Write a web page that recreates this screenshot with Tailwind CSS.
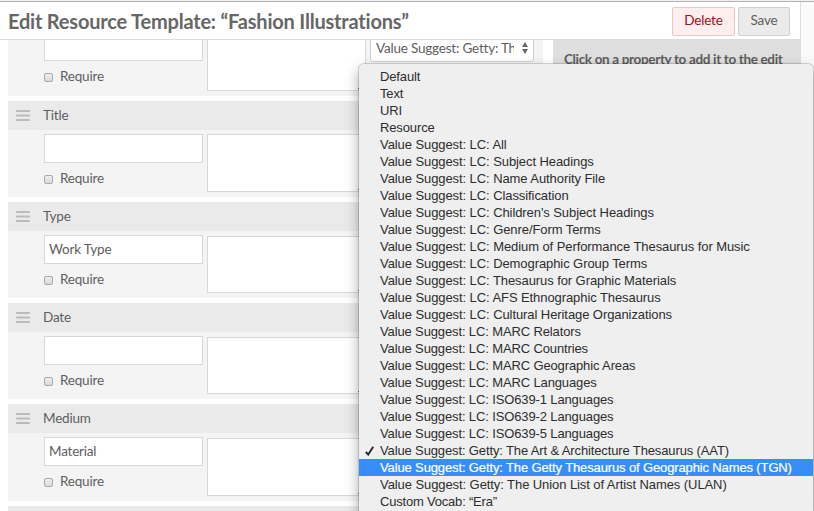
<!DOCTYPE html>
<html lang="en">
<head>
<meta charset="utf-8">
<title>Edit Resource Template</title>
<script src="https://cdn.jsdelivr.net/npm/@tailwindcss/browser@4"></script>
</head>
<body class="relative h-[511px] w-[814px] overflow-hidden bg-white font-[Lato,sans-serif] text-[13.5px] tracking-[-0.2px] text-[#5e5e5e]">
<div class="flex h-[511px] overflow-hidden">
  <div class="flex w-[800px] flex-col">
    <header class="relative z-10 flex h-10 shrink-0 items-center justify-between border-b border-[#dcdcdc] bg-white pt-[3px] pr-[10px] pl-2">
      <h1 class="text-[20px] leading-6 font-bold tracking-[-0.2px] whitespace-nowrap text-[#666]">Edit Resource Template: “Fashion Illustrations”</h1>
      <div class="flex gap-[3px]">
        <button class="h-[29px] w-[63px] rounded-[2px] border border-[#e6c8c8] bg-[#ffeeee] pb-px text-[#9c0f1c]">Delete</button>
        <button class="h-[29px] w-[52px] rounded-[2px] border border-[#cfcfcf] bg-[#ebebeb] pb-px">Save</button>
      </div>
    </header>
    <main class="-mt-10 flex h-[511px] gap-[10px] overflow-hidden pl-2">
      <ul id="rows" class="flex w-[535px] shrink-0 flex-col gap-[5px]"></ul>
      <aside class="h-[511px] w-[247px] bg-[#dfdfdf] pt-[49px] pl-[11px] text-[13.5px] leading-[21px] font-bold tracking-[-0.34px] whitespace-nowrap">Click on a property to add it to the edit</aside>
    </main>
  </div>
  <div class="w-[14px] border-l border-[#dedede] bg-[#fafafa]"></div>
</div>
<div class="absolute top-0 left-0 z-20 h-[2px] w-full border-b border-[#b2b2b2] bg-[#f1f1f1]"></div>

<template id="row">
  <li class="shrink-0 bg-[#f4f4f4]">
    <div class="flex h-[29px] items-center bg-[#eaeaea] pl-2">
      <svg class="mr-[13px] h-[13px] w-[14px]" viewBox="0 0 14 13"><path d="M1 2h12M1 6.5h12M1 11h12" stroke="#bbb" stroke-width="2.2" stroke-linecap="round"/></svg>
      <span class="label pb-px"></span>
    </div>
    <div class="fields flex gap-1 pl-9">
      <div class="w-[159px]">
        <div class="value flex h-[29px] items-center border border-[#d8d8d8] bg-white px-1"></div>
        <label class="mt-[5px] flex h-5 items-center"><span class="mt-[2px] mr-[7px] h-[9px] w-[9px] rounded-[2px] border border-[#a9a9a9] bg-linear-to-b from-[#efefef] to-[#d9d9d9]"></span><span>Require</span></label>
      </div>
      <div class="area"><svg class="absolute right-[1px] bottom-[1px] h-[6px] w-[6px]" viewBox="0 0 6 6"><path d="M0 6L6 0M3 6L6 3" stroke="#555" stroke-width=".9"/></svg></div>
    </div>
  </li>
</template>

<template id="select">
  <div class="flex h-[30px] w-[164px] items-center rounded-[3px] border border-[#cfcfcf] bg-white pt-[2px] pr-[5px] pl-[5px]">
    <span class="w-[138px] overflow-hidden whitespace-nowrap">Value Suggest: Getty: The Art</span>
    <svg class="ml-auto h-3 w-[6px]" viewBox="0 0 6 12"><path d="M0 5L3 0l3 5zM0 7h6L3 12z" fill="#666"/></svg>
  </div>
</template>

<div id="menu" class="absolute top-16 left-[359px] z-30 h-[447px] w-[454px] overflow-hidden rounded-t-[5px] bg-[#efefef] pt-1 font-['Liberation_Sans',sans-serif] text-[13px] leading-[17px] text-[#2d2d2d] shadow-[0_0_0_1px_rgba(0,0,0,0.14),0_6px_14px_rgba(0,0,0,0.35)]"></div>

<script>
const list = document.getElementById('rows');
const tpl = document.getElementById('row');
const rows = [
  { label: '', value: '', row: 'h-24', fields: 'pt-[3px]', area: 'h-[59px]', select: true },
  { label: 'Title', value: '', row: 'h-24', fields: 'pt-1', area: 'h-[58px]' },
  { label: 'Type', value: 'Work Type', row: 'h-24', fields: 'pt-1', area: 'mt-px h-[57px]' },
  { label: 'Date', value: '', row: 'h-24', fields: 'pt-1', area: 'mt-px h-[57px]' },
  { label: 'Medium', value: 'Material', row: 'h-[97px]', fields: 'pt-1', area: 'mt-px h-[58px]' }
];
rows.forEach(r => {
  const n = tpl.content.cloneNode(true);
  n.querySelector('li').className += ' ' + r.row;
  n.querySelector('.label').textContent = r.label;
  n.querySelector('.value').textContent = r.value;
  n.querySelector('.fields').className += ' ' + r.fields;
  n.querySelector('.area').className += ' relative w-[159px] border border-[#d8d8d8] bg-white ' + r.area;
  if (r.select) n.querySelector('.fields').append(document.getElementById('select').content.cloneNode(true));
  list.append(n);
});
const next = document.createElement('li');
next.className = 'h-[5px] shrink-0 bg-[#eaeaea]';
list.append(next);

const menu = document.getElementById('menu');
['Default','Text','URI','Resource',
 ...['All','Subject Headings','Name Authority File','Classification',"Children's Subject Headings",'Genre/Form Terms','Medium of Performance Thesaurus for Music','Demographic Group Terms','Thesaurus for Graphic Materials','AFS Ethnographic Thesaurus','Cultural Heritage Organizations','MARC Relators','MARC Countries','MARC Geographic Areas','MARC Languages','ISO639-1 Languages','ISO639-2 Languages','ISO639-5 Languages'].map(s => 'Value Suggest: LC: ' + s),
 'Value Suggest: Getty: The Art & Architecture Thesaurus (AAT)','Value Suggest: Getty: The Getty Thesaurus of Geographic Names (TGN)','Value Suggest: Getty: The Union List of Artist Names (ULAN)','Custom Vocab: “Era”'
].forEach((text, i) => {
  const d = document.createElement('div');
  d.className = i === 23 ? 'flex h-[17px] items-center bg-[#378efb] text-white [-webkit-text-stroke:0.2px_white]' : 'flex h-[17px] items-center';
  d.innerHTML = '<span class="flex w-[21px] shrink-0 justify-center">' + (i === 22 ? '<svg class="h-[10px] w-[9px]" viewBox="0 0 9 10"><path d="M.8 5.8L3.2 8.6L8.2 .8" fill="none" stroke="#222" stroke-width="1.8"/></svg>' : '') + '</span>';
  const s = document.createElement('span');
  if (i === 24 || (i > 3 && i < 15)) s.className = 'whitespace-nowrap tracking-[-0.08px]';
  else if (i === 25) s.className = 'whitespace-nowrap';
  else s.className = 'whitespace-nowrap tracking-[-0.13px]';
  s.textContent = text;
  d.append(s);
  menu.append(d);
});
</script>
</body>
</html>
